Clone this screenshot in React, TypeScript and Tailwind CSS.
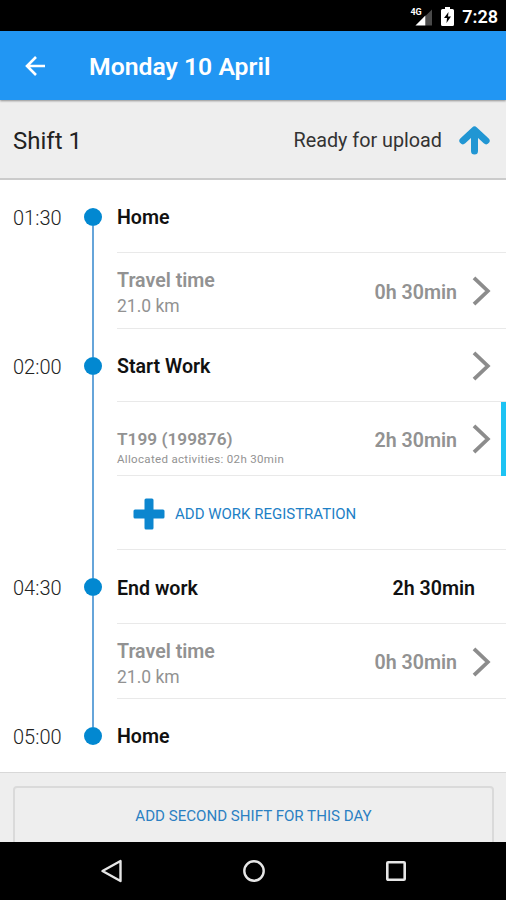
import React from 'react';
import clsx from 'clsx';

interface ShiftRow {
  id: number;
  height: string;
  time?: string;
  title?: string;
  subtitle?: string;
  note?: string;
  duration?: string;
  chevron?: boolean;
  highlighted?: boolean;
  action?: string;
}

const rows: ShiftRow[] = [
  { id: 1, height: 'h-[73px]', time: '01:30', title: 'Home' },
  { id: 2, height: 'h-[76px]', title: 'Travel time', subtitle: '21.0 km', duration: '0h 30min', chevron: true },
  { id: 3, height: 'h-[73px]', time: '02:00', title: 'Start Work', chevron: true },
  {
    id: 4,
    height: 'h-[74px]',
    title: 'T199 (199876)',
    note: 'Allocated activities: 02h 30min',
    duration: '2h 30min',
    chevron: true,
    highlighted: true,
  },
  { id: 5, height: 'h-[74px]', action: 'ADD WORK REGISTRATION' },
  { id: 6, height: 'h-[74px]', time: '04:30', title: 'End work', duration: '2h 30min' },
  { id: 7, height: 'h-[75px]', title: 'Travel time', subtitle: '21.0 km', duration: '0h 30min', chevron: true },
  { id: 8, height: 'h-[73px]', time: '05:00', title: 'Home' },
];

function StatusBar() {
  return (
    <div className="flex h-[31px] shrink-0 items-center justify-end bg-black pr-[8px] text-white">
      <div className="flex h-5 items-start pt-px">
        <span className="text-[9px] leading-[10px] font-bold tracking-[-0.3px]">4G</span>
        <svg className="-ml-[6px] mt-[2px]" width="17" height="17" viewBox="0 0 18 17">
          <path d="M18 0V17H11V7Z" fill="#4a4a4a" />
          <path d="M11 6.5V17H0.5Z" fill="#fff" />
        </svg>
      </div>
      <svg className="mt-px ml-[9px]" width="13" height="19" viewBox="0 0 13 19">
        <path d="M4 0h5v2h2.500q1.500 0 1.500 1.500v14q0 1.500-1.500 1.500h-10Q0 19 0 17.500v-14Q0 2 1.500 2H4z" fill="#fff" />
        <path d="M7.500 5L3 11h3l-.5 5L10 9.500H7z" fill="#000" />
      </svg>
      <span className="mt-[2px] ml-[8px] text-[18px] leading-5 font-semibold">7:28</span>
    </div>
  );
}

function Chevron() {
  return (
    <svg className="mt-px mr-[15px] ml-[15px] shrink-0" width="19" height="30" viewBox="0 0 19 30" fill="none">
      <path d="M2 1.800L15.800 15L2 28.200" stroke="#8c8c8c" strokeWidth="3.800" />
    </svg>
  );
}

function TimelineRow({ row, first, last }: { row: ShiftRow; first: boolean; last: boolean }) {
  const isStop = Boolean(row.time);

  return (
    <div className={clsx('flex', row.height)}>
      <div className="flex w-[84px] items-center pt-[2px] pl-[13px] text-[20px] font-light text-[#222]">
        {row.time}
      </div>

      {/* Rail */}
      <div className="flex w-[18px] flex-col items-center">
        <div className={clsx('w-[2px] flex-1', first ? 'bg-transparent' : 'bg-[#66a5da]')} />
        {isStop && <div className="size-[18px] rounded-full bg-[#0288d1]" />}
        <div className={clsx('w-[2px] flex-1', last ? 'bg-transparent' : 'bg-[#66a5da]')} />
      </div>

      <div
        className={clsx(
          'ml-[15px] flex flex-1 items-center',
          !last && 'border-b border-[#e9e9e9]',
          isStop ? 'text-[#111]' : 'text-[#929292]',
        )}
      >
        {row.action ? (
          <button className="flex items-center pl-[16px] text-[15px] text-[#1d80c6]">
            <svg className="mt-[2px]" width="32" height="32" viewBox="0 0 32 32">
              <rect x="11.500" y="0.500" width="9" height="31" rx="1.500" fill="#0c86cf" />
              <rect x="0.500" y="11.500" width="31" height="9" rx="1.500" fill="#0c86cf" />
            </svg>
            <span className="mt-[4px] ml-[10px]">{row.action}</span>
          </button>
        ) : (
          <div
            className={clsx(
              'flex flex-1 flex-col',
              row.note ? 'pt-[12px]' : row.subtitle ? 'pt-[7px]' : last ? 'pt-[3px]' : 'pt-[4px]',
            )}
          >
            <span
              className={clsx(
                'font-semibold',
                row.note ? 'mt-[6px] text-[17.250px] leading-[22px]' : 'text-[19.600px] leading-[24px]',
              )}
            >
              {row.title}
            </span>
            {row.subtitle && <span className="text-[17.500px] leading-[26px]">{row.subtitle}</span>}
            {row.note && <span className="text-[11.500px] leading-[18px] tracking-[0.330px]">{row.note}</span>}
          </div>
        )}
        {row.duration && (
          <span className={clsx('pt-[4px] text-[19.600px] font-semibold', !row.chevron && 'mr-[31px]')}>
            {row.duration}
          </span>
        )}
        {row.chevron && <Chevron />}
      </div>

      {row.highlighted && <div className="-ml-[5px] w-[5px] bg-[#1ec3f3]" />}
    </div>
  );
}

function NavBar() {
  return (
    <div className="flex h-[58px] shrink-0 items-center justify-between bg-black pr-[98px] pl-[100px]">
      <svg width="24" height="26" viewBox="0 0 24 26" fill="none" stroke="#e6e6e6" strokeWidth="2.400">
        <path d="M20.500 3V23L2.500 13Z" strokeLinejoin="round" />
      </svg>
      <svg width="24" height="26" viewBox="0 0 24 26" fill="none" stroke="#e6e6e6" strokeWidth="2.400">
        <circle cx="12" cy="13" r="9.700" />
      </svg>
      <svg width="24" height="26" viewBox="0 0 24 26" fill="none" stroke="#e6e6e6" strokeWidth="2.600">
        <rect x="3.300" y="4.300" width="17.400" height="17.400" rx="0.800" />
      </svg>
    </div>
  );
}

export default function App() {
  return (
    <div className="flex h-[900px] w-[506px] flex-col overflow-hidden bg-white font-['Roboto',sans-serif]">
      <StatusBar />

      <header className="z-10 flex h-[69px] shrink-0 items-center bg-[#2196f3] pl-[25px] text-white shadow-[0_1px_2px_rgba(0,0,0,0.4)]">
        <svg width="21" height="20" viewBox="0 0 21 20" fill="none" stroke="#fff" strokeWidth="2.600">
          <path d="M20 10H2.500M11 1L2 10l9 9" />
        </svg>
        <h1 className="mt-[3px] ml-[43px] text-[24.750px] font-semibold">Monday 10 April</h1>
      </header>

      <div className="flex h-[80px] shrink-0 items-center border-b-2 border-[#cbcbcb] bg-[#eee] pr-[16px] pl-[13px]">
        <span className="mt-[4px] flex-1 text-[24px] text-[#222]">Shift 1</span>
        <span className="mt-[3px] text-[19.750px] text-[#333]">Ready for upload</span>
        <svg className="mt-px ml-[17px]" width="31" height="30" viewBox="0 0 31 30" fill="none">
          <path d="M15.500 26V6M3.900 15.700L15.500 5l11.600 10.700" stroke="#2196d3" strokeWidth="7" strokeLinecap="round" strokeLinejoin="round" />
        </svg>
      </div>

      <main className="shrink-0">
        {rows.map((row, i) => (
          <TimelineRow key={row.id} row={row} first={i === 0} last={i === rows.length - 1} />
        ))}
      </main>

      <div className="h-[70px] shrink-0 overflow-hidden border-t border-[#d8d8d8] bg-[#eee] pr-[12px] pl-[13px] pt-[13px]">
        <button className="flex h-[80px] w-full justify-center rounded-[4px] border-2 border-[#dadada] pt-[17px] text-[15.100px] leading-[22px] text-[#2b80c2]">
          ADD SECOND SHIFT FOR THIS DAY
        </button>
      </div>

      <NavBar />
    </div>
  );
}
